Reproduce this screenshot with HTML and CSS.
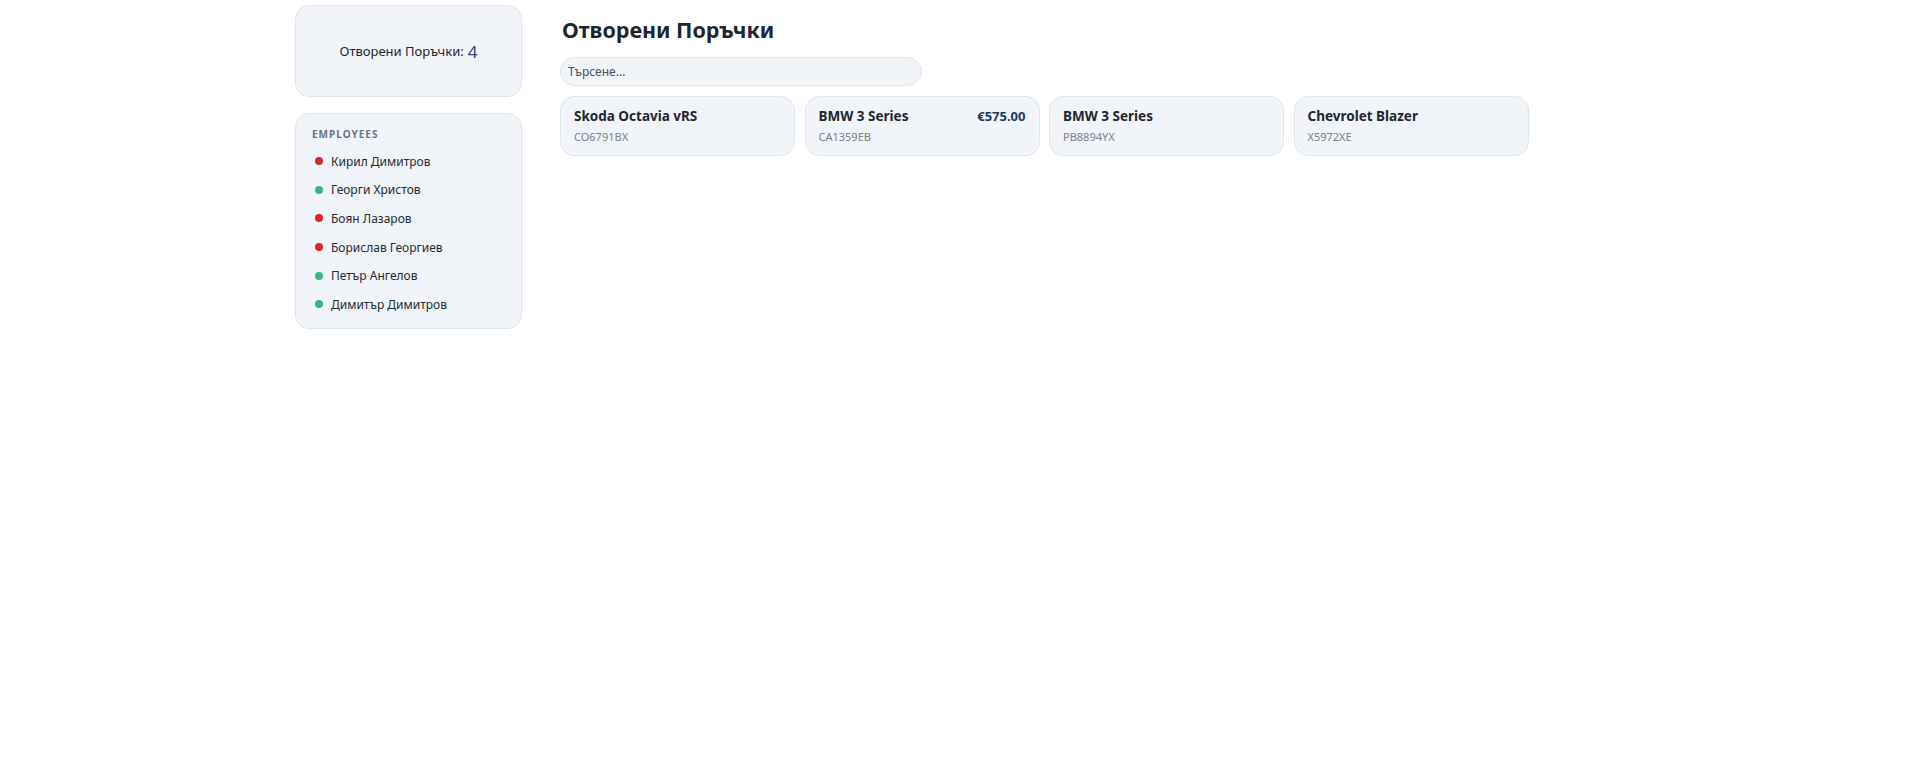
FILE: index.html
```html
<!DOCTYPE html>
<html lang="bg">
<head>
    <meta charset="UTF-8">
    <meta name="viewport" content="width=device-width, initial-scale=1.0">
    <title>Отворени Поръчки</title>
    <link rel="stylesheet" href="styles.css">
</head>
<body>
    <div class="layout">
        <aside class="sidebar">
            <div class="panel counter">
                <span class="counter-label">Отворени Поръчки:</span>
                <span class="counter-value">4</span>
            </div>
            <div class="panel employees">
                <div class="panel-title">Employees</div>
                <ul class="employee-list">
                    <li><span class="dot busy"></span>Кирил Димитров</li>
                    <li><span class="dot free"></span>Георги Христов</li>
                    <li><span class="dot busy"></span>Боян Лазаров</li>
                    <li><span class="dot busy"></span>Борислав Георгиев</li>
                    <li><span class="dot free"></span>Петър Ангелов</li>
                    <li><span class="dot free"></span>Димитър Димитров</li>
                </ul>
            </div>
        </aside>
        <main class="content">
            <h1>Отворени Поръчки</h1>
            <input class="search" type="text" placeholder="Търсене...">
            <div class="orders">
                <div class="order">
                    <div class="order-top">
                        <span class="car">Skoda Octavia vRS</span>
                    </div>
                    <div class="plate">CO6791BX</div>
                </div>
                <div class="order">
                    <div class="order-top">
                        <span class="car">BMW 3 Series</span>
                        <span class="price">€575.00</span>
                    </div>
                    <div class="plate">CA1359EB</div>
                </div>
                <div class="order">
                    <div class="order-top">
                        <span class="car">BMW 3 Series</span>
                    </div>
                    <div class="plate">PB8894YX</div>
                </div>
                <div class="order">
                    <div class="order-top">
                        <span class="car">Chevrolet Blazer</span>
                    </div>
                    <div class="plate">X5972XE</div>
                </div>
            </div>
        </main>
    </div>
</body>
</html>
```

FILE: styles.css
```css
body {
    font-family: "Noto Sans", "Open Sans", Arial, sans-serif;
    color: #1f2630;
    background: #fff;
    margin: 0;
    padding: 0;
}
.layout {
    display: flex;
    gap: 38px;
    width: 1325px;
    margin: 0 auto;
    padding-top: 5px;
}
.sidebar {
    width: 227px;
    flex-shrink: 0;
    display: flex;
    flex-direction: column;
    gap: 16px;
}
.panel {
    background-color: #f1f4f8;
    border: 1px solid #e1e6ec;
    border-radius: 14px;
    box-sizing: border-box;
}
.counter {
    height: 92px;
    display: flex;
    justify-content: center;
    align-items: center;
    gap: 4px;
    font-size: 13px;
}
.counter-value {
    font-size: 17px;
    color: #2b4a6f;
}
.employees {
    padding: 13px 16px 9px;
}
.panel-title {
    font-size: 10px;
    font-weight: 700;
    letter-spacing: 1px;
    text-transform: uppercase;
    color: #6b7380;
    margin-bottom: 6px;
}
.employee-list {
    list-style: none;
    margin: 0;
    padding: 0;
}
.employee-list li {
    display: flex;
    align-items: center;
    height: 28.6px;
    font-size: 12px;
    color: #252b33;
}
.dot {
    width: 8px;
    height: 8px;
    border-radius: 50%;
    margin: 0 8px 0 3px;
}
.dot.busy {
    background-color: #d9262b;
}
.dot.free {
    background-color: #3bb57c;
}
.content {
    flex: 1;
}
h1 {
    font-size: 21.5px;
    font-weight: 700;
    margin: 10px 0 13px 2px;
    color: #1f2630;
}
.search {
    display: block;
    width: 362px;
    height: 29px;
    box-sizing: border-box;
    padding: 0 7px;
    border: 1px solid #e1e6ec;
    border-radius: 15px;
    background-color: #f1f4f8;
    font-family: inherit;
    font-size: 12px;
    color: #1f2630;
}
.search::placeholder {
    color: #4a515b;
}
.orders {
    display: grid;
    grid-template-columns: repeat(4, 235px);
    gap: 9.5px;
    margin-top: 10px;
}
.order {
    height: 60px;
    box-sizing: border-box;
    padding: 10px 13px;
    background-color: #f1f4f8;
    border: 1px solid #e1e6ec;
    border-radius: 14px;
}
.order-top {
    display: flex;
    justify-content: space-between;
    align-items: center;
}
.car {
    font-size: 13.5px;
    font-weight: 700;
    color: #1f2630;
}
.price {
    font-size: 13px;
    font-weight: 700;
    color: #1c3b63;
}
.plate {
    font-size: 11px;
    color: #7a818b;
    margin-top: 4px;
}
```
